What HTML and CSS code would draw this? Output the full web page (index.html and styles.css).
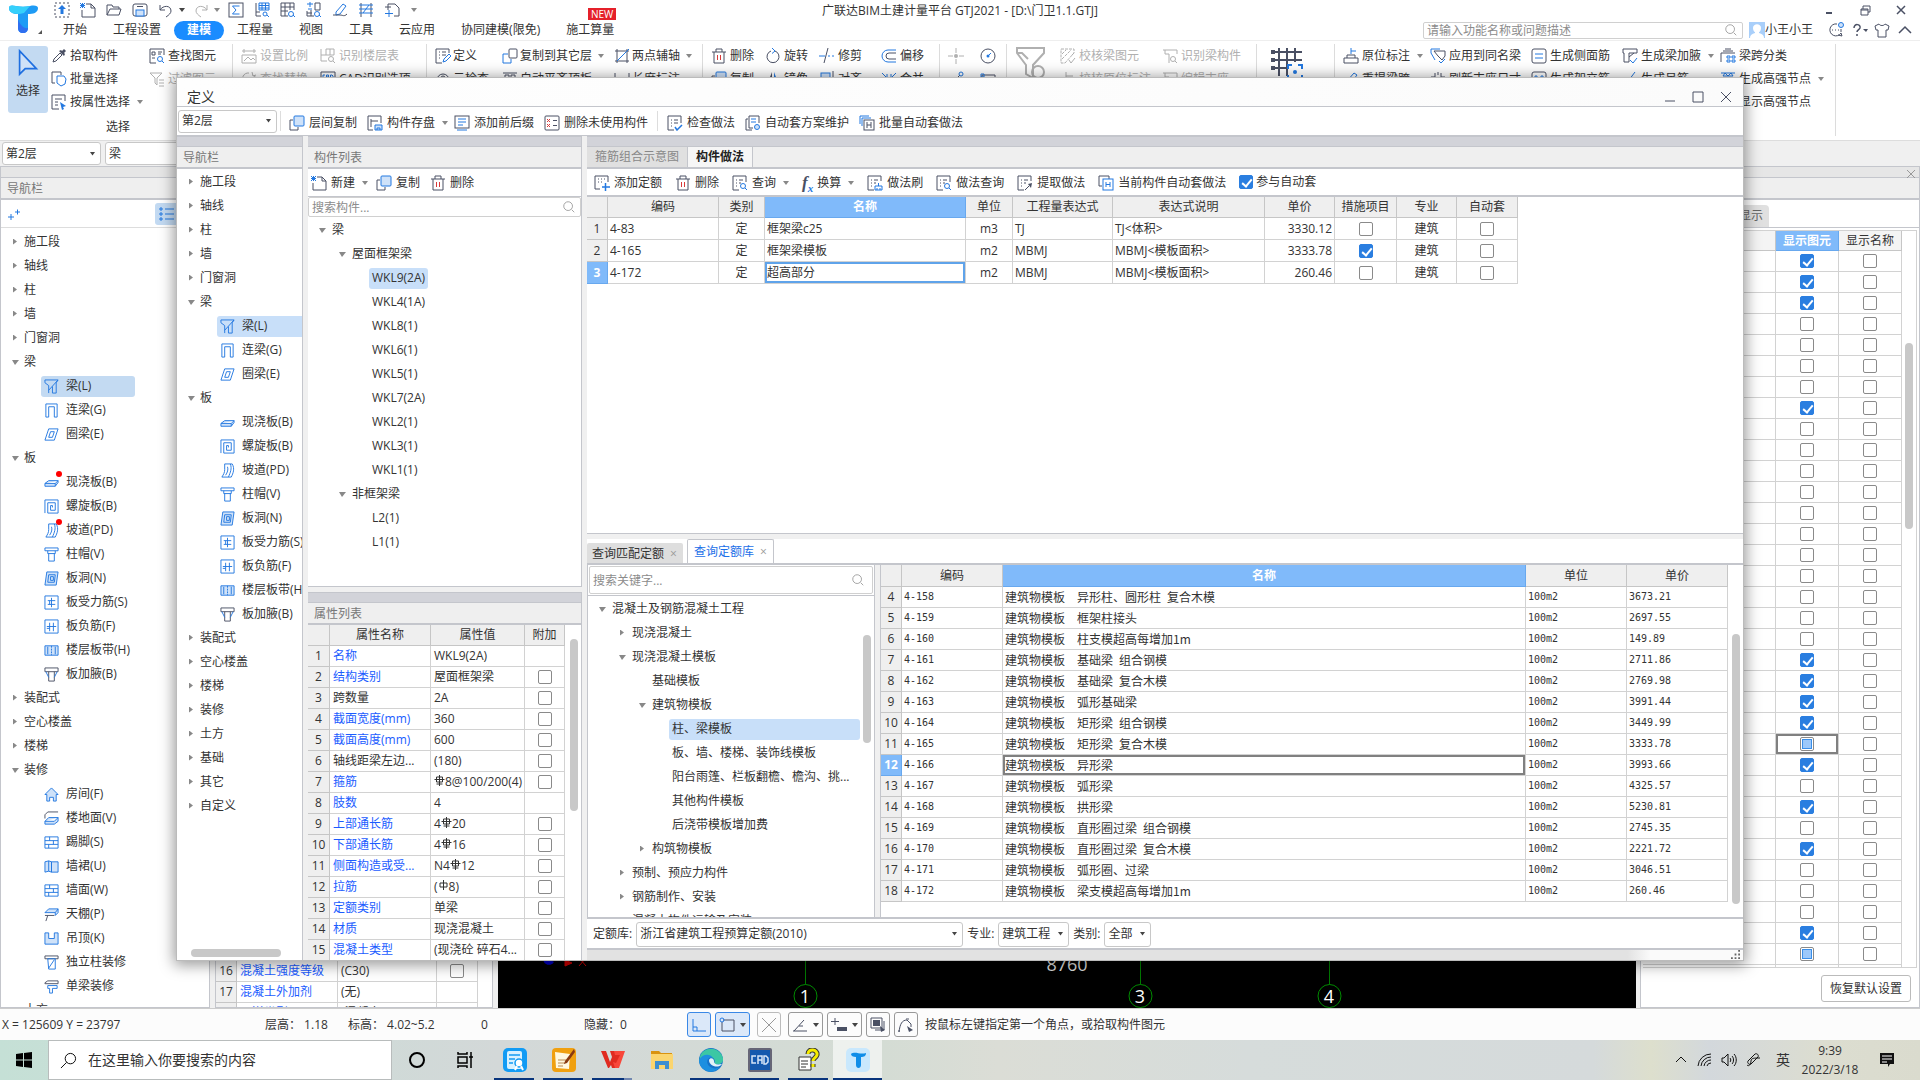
FILE: index.html
```html
<!DOCTYPE html>
<html lang="zh-CN">
<head>
<meta charset="utf-8">
<title>广联达BIM土建计量平台 GTJ2021</title>
<link rel="stylesheet" href="styles.css">
</head>
<body>
<svg class="sprite" aria-hidden="true">
  <symbol id="logo" viewBox="0 0 34 30"><path d="M1 4c0-3 3-3 7-2 5 1 9 1 14 0 5-1 8 0 8 2 0 5-5 6-10 6v14c0 3-2 5-5 5s-5-2-5-5V10C5 10 1 8 1 4z" fill="#1e9bf5"/><path d="M1 4c0-3 3-3 7-2 5 1 9 1 14 0l-6 7C9 11 1 10 1 4z" fill="#35d0fb"/><path d="M10 15v9c0 3 2 5 5 5s5-2 5-5c-4 1-8-3-10-9z" fill="#2f6ff0"/><path d="M34 26v5h-5z" fill="#555"/></symbol>
  <symbol id="up" viewBox="0 0 16 16"><rect x="1" y="1" width="14" height="14" stroke-dasharray="2 2"/><path class="bf" d="M8 3l4 4H9.500v5h-3V7H4z"/></symbol>
  <symbol id="new" viewBox="0 0 16 16"><path d="M6 2h5l4 4v9H2V8M11 2v4h4"/><path class="b" d="M0 1l5 5M5 1L0 6M0 3.500h5M2.500 1v5"/></symbol>
  <symbol id="open" viewBox="0 0 16 16"><path d="M1 13V3h5l1 2h6v2M1 13L4 7h11l-2 6z"/></symbol>
  <symbol id="save" viewBox="0 0 16 16"><rect x="1" y="2" width="14" height="12" rx="2"/><rect class="b bl" x="4" y="8" width="8" height="6"/><path d="M5 4.500h6"/></symbol>
  <symbol id="undo" viewBox="0 0 16 16"><path d="M2 3v5h5M2 8c3-5 11-5 11 1 0 2-2 4-5 6"/></symbol>
  <symbol id="redo" viewBox="0 0 16 16"><path d="M14 3v5H9M14 8C11 3 3 3 3 9c0 2 2 4 5 6"/></symbol>
  <symbol id="sum" viewBox="0 0 16 16"><rect x="1" y="1" width="14" height="14"/><path class="b" d="M11.500 4h-7L8 8l-3.500 4h7"/></symbol>
  <symbol id="t1" viewBox="0 0 16 16"><path d="M2 1v13h5M2 10h4"/><path class="b" d="M5 1h10v7H5zM5 3.500h10M5 6h10M8 1v7M11.500 1v7"/><circle class="b" cx="11" cy="12" r="2"/><path class="b" d="M13 13l2 2"/></symbol>
  <symbol id="t2" viewBox="0 0 16 16"><path d="M1 1h13v7M1 1v13h7M1 5h13M1 9h7M5 1v13M10 1v7"/><circle class="b" cx="11" cy="12" r="2.500"/><path class="b" d="M13 13l2 2"/></symbol>
  <symbol id="t3" viewBox="0 0 16 16"><path class="b" d="M4 0v5M1 2h6M2 7h4"/><path d="M9 1h5v7H9zM1 9v5h7M1 11h5M5 8v6"/><circle class="b" cx="11" cy="12" r="2.500"/><path class="b" d="M13 13l2 2"/></symbol>
  <symbol id="edit" viewBox="0 0 16 16"><path class="b" d="M4 10l7-8 3 2-6 8-4 1z"/><path d="M1 13h7c3 0 4 2 7-1"/></symbol>
  <symbol id="ladder" viewBox="0 0 16 16"><path d="M3 1v14M13 1v14"/><path class="b" d="M1 3h14M1 7h14M1 11h14M5 11l6-8"/></symbol>
  <symbol id="addp" viewBox="0 0 16 16"><path d="M4 8V2h7l4 4v8h-5M1 5h6"/><path class="b" d="M5 8v7M1 11.500h8"/></symbol>
  <symbol id="cursor" viewBox="0 0 22 30"><path d="M2 2v25l6-6h12z" fill="#cfe1f8" stroke="#1f6fe0" stroke-width="1.800"/></symbol>
  <symbol id="drop" viewBox="0 0 16 16"><path d="M2 14l1-3 6-6 2 2-6 6z"/><path class="df" d="M8 3l2-1 1 1 2-2 2 2-2 2 1 1-1 2z"/></symbol>
  <symbol id="multi" viewBox="0 0 16 16"><path d="M4 12H1V1h9v3"/><path class="b" d="M6 5h7l2 3-1 5-4 2-4-3z"/></symbol>
  <symbol id="attr" viewBox="0 0 16 16"><path d="M8 15H1V1h13v6M4 5h7M4 8h3M4 11h3"/><path class="bf" d="M9 8l6 4-3 1 1 2-2 1z"/></symbol>
  <symbol id="find" viewBox="0 0 16 16"><path d="M7 15H1V1h14v6M3 4h3v3H3zM3 10h3M9 4h4M9 6h3"/><circle class="b" cx="11" cy="11" r="2.500"/><path class="b" d="M13 13l2 2"/></symbol>
  <symbol id="filter" viewBox="0 0 16 16"><path d="M1 2h12L8 7v7l-2-2V7zM10 9h5M10 12h5M10 15h5"/></symbol>
  <symbol id="scale" viewBox="0 0 16 16"><path d="M1 3h14M3 1v4M13 1v4M1 7h14v8H1zM3 13l4-4 3 3 2-2 2 2"/></symbol>
  <symbol id="floor" viewBox="0 0 16 16"><path d="M1 1v12h6M1 7h5M6 1h8v6H6zM10 1v6"/><circle class="b" cx="11" cy="11" r="2.500"/><path class="b" d="M13 13l2 2"/></symbol>
  <symbol id="swap" viewBox="0 0 16 16"><path d="M3 12A6 6 0 0 1 8 2M13 4a6 6 0 0 1-5 10M11 1l1 4 3-1"/></symbol>
  <symbol id="cad" viewBox="0 0 16 16"><path d="M1 1h14v14H1z"/><path class="b" d="M5 4H3v4h2M6.500 8V4h2v4M6.500 6h2M10.500 4v4h1.500l1-1V5l-1-1z"/></symbol>
  <symbol id="define" viewBox="0 0 16 16"><path d="M7 15H1V1h13v4M4 4h1M7 4h4M4 7h1M7 7h4M4 10h1"/><path class="b" d="M8 14l1-3 5-5 2 2-5 5z"/></symbol>
  <symbol id="copy" viewBox="0 0 16 16"><path d="M4 5H1v10h8v-3"/><rect class="b bl" x="5" y="1" width="10" height="10" rx="1"/></symbol>
  <symbol id="copy2" viewBox="0 0 16 16"><rect x="7" y="1" width="8" height="9" rx="1"/><path class="b" d="M6 6H1v9h8v-4"/></symbol>
  <symbol id="axis" viewBox="0 0 16 16"><path d="M3 1v14M13 1v14M1 3h14M1 13h14"/><path class="b" d="M3 13L15 1"/></symbol>
  <symbol id="cloud" viewBox="0 0 16 16"><path d="M2 9a6 6 0 0 1 12 0v6H2z"/><circle cx="8" cy="7" r="2"/></symbol>
  <symbol id="slab" viewBox="0 0 16 16"><path d="M1 2h14M3 4h4v10H3zM9 4h4v10H9z"/></symbol>
  <symbol id="dim" viewBox="0 0 16 16"><path d="M1 2v12M15 2v12"/><path class="b" d="M1 10h14M4 7l-3 3 3 3M12 7l3 3-3 3"/></symbol>
  <symbol id="trash" viewBox="0 0 16 16"><path d="M1 4h14M5 4V1h6v3M3 4v11h10V4"/><path class="r" d="M6.500 7v5M9.500 7v5"/></symbol>
  <symbol id="rotate" viewBox="0 0 16 16"><path d="M10 3a6 6 0 1 1-4 0"/><path class="b" d="M7 0l3 3-3 2.500"/></symbol>
  <symbol id="trim" viewBox="0 0 16 16"><path d="M9 0L5 15"/><path class="b" d="M0 8h6M9 8h2M13 8h2"/></symbol>
  <symbol id="offset" viewBox="0 0 16 16"><path d="M15 5H8a2.500 2.500 0 0 0 0 6h7"/><path class="b" d="M15 2H7a6 6 0 0 0 0 12h8"/></symbol>
  <symbol id="mirror" viewBox="0 0 16 16"><path class="df" d="M7 1v13H2z"/><path class="bf" d="M9 1v13h5z"/></symbol>
  <symbol id="align" viewBox="0 0 16 16"><rect class="b bl" x="2" y="2" width="9" height="6"/><path d="M14 0v16M5 11h6v4H5z"/></symbol>
  <symbol id="merge" viewBox="0 0 16 16"><path class="b" d="M1 2l5 5V3M15 2l-5 5V3M1 14l5-5M15 14l-5-5"/></symbol>
  <symbol id="refresh" viewBox="0 0 16 16"><path d="M1 6h4V2M15 6h-4V2M8 1v3M1 10h4v4M15 10h-4v4"/></symbol>
  <symbol id="point" viewBox="0 0 16 16"><path d="M8 0v5M8 11v5M0 8h5M11 8h5"/><circle class="df" cx="8" cy="8" r="2"/></symbol>
  <symbol id="circle" viewBox="0 0 16 16"><circle cx="8" cy="8" r="7"/><path class="b" d="M8 8l3-3"/><circle class="bf" cx="8" cy="8" r="1.500"/></symbol>
  <symbol id="line" viewBox="0 0 16 16"><path d="M2 14L12 4"/><circle class="b" cx="13" cy="3" r="2"/></symbol>
  <symbol id="rect" viewBox="0 0 16 16"><path d="M2 4h13v10H2z"/><path class="b" d="M1 3h3v3H1z"/></symbol>
  <symbol id="bigfilter" viewBox="0 0 32 36"><path d="M2 2h27v5L18 19v13l-7-4V19L2 7zM2 7h5l6 6" stroke-width="2"/><circle cx="23" cy="26" r="6" stroke-width="2"/></symbol>
  <symbol id="hatch" viewBox="0 0 16 16"><path d="M1 1h13v4L5 15H1zM2 6l4-4M2 11l9-9M14 5l-3 3" stroke-dasharray="3 1"/><path d="M9 12l2 3 4-5"/></symbol>
  <symbol id="ident" viewBox="0 0 16 16"><path d="M1 2h14M3 2v4h4v9M15 2v4"/><circle class="b" cx="11" cy="11" r="2.500"/><path class="b" d="M13 13l2 2"/></symbol>
  <symbol id="mark" viewBox="0 0 16 16"><path d="M6 1v10M6 5h7M1 11h11v4H1z"/></symbol>
  <symbol id="biggrid" viewBox="0 0 32 36"><path d="M2 6h29M2 14h29M2 22h14M8 2v28M16 2v28M24 2v14" stroke-width="2"/><path class="df" d="M0 4h4v4H0zM0 12h4v4H0zM0 20h4v4H0z"/><path class="b" d="M17 23v-4h4M27 19h4v4M17 29v4h4M31 29v4h-4" stroke-width="2"/><circle class="bf" cx="24" cy="26" r="2"/></symbol>
  <symbol id="origin" viewBox="0 0 16 16"><path d="M1 10h14v5H1zM4 10V7h8v3"/><path class="b" d="M8 0v6M8 3h5"/></symbol>
  <symbol id="apply" viewBox="0 0 16 16"><path d="M4 3h11v5l-3 4-4-4z"/><path class="b" d="M5 12L1 5V1h9M9 13l2 2 4-4"/></symbol>
  <symbol id="side" viewBox="0 0 16 16"><rect x="1" y="1" width="14" height="14" rx="2"/><path class="b" d="M4 6h8M4 10h8"/></symbol>
  <symbol id="dots" viewBox="0 0 16 16"><rect x="1" y="1" width="14" height="14" rx="2"/><path class="b" d="M4 5h2v2H4zM10 5h2v2h-2z"/></symbol>
  <symbol id="haunch" viewBox="0 0 16 16"><path d="M1 1h14v4H7v9H2V5H1zM7 9l5-4"/><path class="b" d="M8 12l3 3 4-5"/></symbol>
  <symbol id="tick" viewBox="0 0 16 16"><path class="b" d="M4 6l3 3 6-8"/></symbol>
  <symbol id="span" viewBox="0 0 16 16"><path d="M1 14V5h14M3 3h10M5 1h6"/><path class="b" d="M7 8h3v2H7zM12 8h3v2h-3zM7 12h3v2H7zM12 12h3v2h-3z"/></symbol>
  <symbol id="node" viewBox="0 0 16 16"><path class="b" d="M1 2h14M3 5l2-3 3 3 3-3 2 3z"/><path d="M1 8h14M4 8v7M12 8v7"/></symbol>
  <symbol id="disk" viewBox="0 0 16 16"><path d="M6 15H1V1h13v7M4 4v8M4 6h7"/><path class="b bl" d="M8 10h7v5H8zM10 15v-2h3v2"/></symbol>
  <symbol id="lines" viewBox="0 0 16 16"><rect x="1" y="1" width="14" height="12"/><path class="b" d="M4 4h8M4 7h8M4 10h5M3 15h10"/></symbol>
  <symbol id="unused" viewBox="0 0 16 16"><rect x="1" y="1" width="14" height="14" rx="1"/><path class="r" d="M3 4l3 3M6 4L3 7M3 9l3 3M6 9l-3 3"/><path d="M9 5.500h4M9 10.500h4"/></symbol>
  <symbol id="check" viewBox="0 0 16 16"><path d="M7 15H1V1h13v7M4 5h1M7 5h4M4 8h1M7 8h4M4 11h1"/><path class="b" d="M8 12l2 3 5-5" stroke-width="1.500"/></symbol>
  <symbol id="plan" viewBox="0 0 16 16"><path d="M7 15H1V4h2M8 13H4V1h10v7"/><path class="b" d="M6 4h5M6 7h5"/><circle class="b bl" cx="12" cy="12" r="2.500"/></symbol>
  <symbol id="batch" viewBox="0 0 16 16"><path class="b" d="M1 9V1h9M3 11V3h9"/><rect x="5" y="5" width="10" height="10"/><path d="M8 7v6M12 7v6M8 10h4"/></symbol>
  <symbol id="batch2" viewBox="0 0 16 16"><path d="M4 11H1V1h10v3"/><rect class="b" x="5" y="4" width="10" height="11"/><path class="b" d="M8 7v5M12 7v5M8 9.500h4"/></symbol>
  <symbol id="addq" viewBox="0 0 16 16"><path d="M6 14H1V1h13v6M4 4h1M7 4h1M10 4h1M4 7h1M7 7h1"/><path class="b" d="M11.500 8v8M8 12h8" stroke-width="1.500"/></symbol>
  <symbol id="query" viewBox="0 0 16 16"><path d="M7 15H1V1h13v6M4 5h1M7 5h4M4 8h1M4 11h1M7 8h2"/><circle class="b" cx="11" cy="11" r="2.500"/><path class="b" d="M13 13l2 2"/></symbol>
  <symbol id="brush" viewBox="0 0 16 16"><path d="M7 15H1V1h13v5M4 5h1M7 5h4M4 8h1M7 8h2M4 11h1"/><path class="b" d="M11.500 8v3M8 11h7v4H8zM10 13v2M13 13v2"/></symbol>
  <symbol id="extract" viewBox="0 0 16 16"><path d="M7 15H1V1h13v5M4 5h1M7 5h4M4 8h1M7 8h2M4 11h1M8 15l4-4"/><path class="df" d="M11 9l4-1-1 5z"/></symbol>
  <symbol id="beam" viewBox="0 0 16 16"><path class="b" d="M5 15V7L1 4V1h14L5 12M9 8v7h4V4l2-3"/></symbol>
  <symbol id="lianliang" viewBox="0 0 16 16"><path class="b" d="M2 15V1h12v14h-3V4H5v11z"/></symbol>
  <symbol id="ring" viewBox="0 0 16 16"><path class="b" d="M5 2h10l-4 12H1zM7 5h4l-2 6H5z"/></symbol>
  <symbol id="board" viewBox="0 0 16 16"><path class="b bl" d="M1 9l4-3h10v2l-3 4H1zM1 9h11l3-3M12 9v3"/></symbol>
  <symbol id="spiral" viewBox="0 0 16 16"><path class="b" d="M1 15V1h14v14H4V4h8v8H7V7h2v2"/></symbol>
  <symbol id="ramp" viewBox="0 0 16 16"><path class="b" d="M5 1h8c3 5 1 10-1 14H2c2-3 3-5 3-8zM8 4c1 3 0 6-2 9M11 1c2 5 0 9-2 14" /></symbol>
  <symbol id="cap" viewBox="0 0 16 16"><path class="b" d="M1 1h14v3H1zM4 4v3h8V4M5 7v8h6V7"/></symbol>
  <symbol id="hole" viewBox="0 0 16 16"><path class="b bl" d="M3 1h12l-2 14H1zM5 4h7l-1 8H4zM7 6h3v4H7z"/></symbol>
  <symbol id="rebar" viewBox="0 0 16 16"><path class="b" d="M1 1h14v14H1zM4 6h8M4 10h8M8 3v10M6 6v4"/></symbol>
  <symbol id="rebar2" viewBox="0 0 16 16"><path class="b" d="M1 1h14v14H1zM6 4v9M10 4v9M3 8h10M3 10h3"/></symbol>
  <symbol id="band" viewBox="0 0 16 16"><path class="b bl" d="M1 3h14v10H1z"/><path class="b" d="M4 4v8M12 4v8" /><path class="b" d="M8 3v10" stroke-dasharray="2 1"/></symbol>
  <symbol id="yezi" viewBox="0 0 16 16"><path d="M1 1h14v4H1zM5 5v10h6V5"/><path class="b" d="M2 5l3 6M14 5l-3 6"/></symbol>
  <symbol id="home" viewBox="0 0 16 16"><path class="b bl" d="M1 8l7-7 7 7h-2v7h-3v-4H6v4H3V8z"/></symbol>
  <symbol id="ground" viewBox="0 0 16 16"><path d="M1 8V4l3-3h11"/><path class="b bl" d="M1 11l4-4h10l-4 4zM1 11v3h10l4-3V7"/></symbol>
  <symbol id="bricks" viewBox="0 0 16 16"><path class="b" d="M1 2h14v12H1zM1 6h14M1 10h14M6 2v4M10 6v4M5 10v4"/></symbol>
  <symbol id="dado" viewBox="0 0 16 16"><path class="b bl" d="M1 3l4-1v11l-4 1zM5 2l3 1v11l-3-1M8 3h7v11H8z"/></symbol>
  <symbol id="ceil" viewBox="0 0 16 16"><path class="b bl" d="M1 6l4-4h10l-3 4zM12 6v3l3-3V2"/><path d="M1 9h10M4 9l-2 6"/></symbol>
  <symbol id="hang" viewBox="0 0 16 16"><path class="b bl" d="M1 2h4v6h6V2h4v12H1z"/></symbol>
  <symbol id="colfin" viewBox="0 0 16 16"><path d="M1 1h14v3H1z"/><path class="b" d="M4 4h8v11H5zM5 14l6-9"/></symbol>
  <symbol id="beamfin" viewBox="0 0 16 16"><path d="M1 4l3-2h11v3H1z"/><path class="b" d="M4 7h10v3H9v5H6v-5H4z"/></symbol>
  <symbol id="mag" viewBox="0 0 16 16"><circle cx="7" cy="7" r="5"/><path d="M11 11l3 3"/></symbol>
  <symbol id="win" viewBox="0 0 16 16"><path d="M0 2l7-1v6.500H0zM8 1l8-1v7.500H8zM0 8.500h7V15l-7-1zM8 8.500h8V16l-8-1z" fill="#000" stroke="none"/></symbol>
</svg>

<header class="titlebar">
  <svg class="logo"><use href="#logo"/></svg>
  <div class="titlemain">
    <div class="quick">
      <svg class="ico"><use href="#up"/></svg><svg class="ico"><use href="#new"/></svg><svg class="ico"><use href="#open"/></svg><svg class="ico"><use href="#save"/></svg><svg class="ico"><use href="#undo"/></svg><i class="dd dk"></i><svg class="ico off"><use href="#redo"/></svg><i class="dd"></i><svg class="ico"><use href="#sum"/></svg><svg class="ico"><use href="#t1"/></svg><svg class="ico"><use href="#t2"/></svg><svg class="ico"><use href="#t3"/></svg><svg class="ico"><use href="#edit"/></svg><svg class="ico"><use href="#ladder"/></svg><svg class="ico"><use href="#addp"/></svg><i class="dd more"></i>
    </div>
    <nav class="tabs">
      <a href="#">开始</a><a href="#">工程设置</a><a href="#" class="on">建模</a><a href="#">工程量</a><a href="#">视图</a><a href="#">工具</a><a href="#">云应用</a><a href="#">协同建模(限免)</a><a href="#">施工算量<b class="newbadge">NEW</b></a>
    </nav>
  </div>
  <h1 class="apptitle">广联达BIM土建计量平台 GTJ2021 - [D:\门卫1.1.GTJ]</h1>
  <div class="titleright">
    <div class="winbtns">
      <button aria-label="最小化"><svg class="ico"><path d="M5 11h6" stroke-width="2"/></svg></button>
      <button aria-label="还原"><svg class="ico"><path d="M4 7h7v6H4zM6 7V4h7v6h-2M4 8h7"/></svg></button>
      <button aria-label="关闭"><svg class="ico"><path d="M4 4l8 8M12 4l-8 8" stroke-width="1.500"/></svg></button>
    </div>
    <div class="userrow">
      <label class="search"><input type="text" placeholder="请输入功能名称或问题描述" aria-label="搜索功能"><svg class="ico mut"><use href="#mag"/></svg></label>
      <svg class="avatar" viewBox="0 0 16 16"><path fill="#a9cffa" d="M0 0h16v16H0z"/><path fill="#fff" d="M4 6c0-5 8-5 8 0 0 2-1 4-2 4v1c3 1 5 2 5 5H1c0-3 2-4 5-5v-1C5 10 4 8 4 6z"/></svg>
      <span class="user">小王小王</span>
      <svg class="ico"><path d="M9 2a6 6 0 1 0 4 9M13 11l1 3-4-1M13 7v3M4 8h1M7 8h1M10 8h1"/><circle class="b bl" cx="13" cy="3" r="2.500"/></svg>
      <svg class="ico wide"><path d="M3 6c0-5 7-4 6 0-1 2-3 2-3 4M6 12v2" stroke-width="1.500"/><path class="df" d="M12 7h5l-2 3z"/></svg>
      <svg class="ico"><path d="M5 2c1 2 5 2 6 0l4 2-1 4h-2v7H4V8H2L1 4z"/></svg>
      <svg class="ico"><path d="M2 11l6-6 6 6" stroke-width="1.500"/></svg>
    </div>
  </div>
</header>

<section class="ribbon">
  <div class="rg g1">
    <button class="bigbtn"><svg class="cursor"><use href="#cursor"/></svg>选择</button>
    <div class="cols">
      <button><svg class="ico"><use href="#drop"/></svg>拾取构件</button><button><svg class="ico"><use href="#find"/></svg>查找图元</button>
      <button><svg class="ico"><use href="#multi"/></svg>批量选择</button><button class="off"><svg class="ico"><use href="#filter"/></svg>过滤图元</button>
      <button><svg class="ico"><use href="#attr"/></svg>按属性选择<i class="dd"></i></button>
      <span class="glabel">选择</span>
    </div>
  </div>
  <div class="rg g2">
    <button class="off"><svg class="ico"><use href="#scale"/></svg>设置比例</button><button class="off"><svg class="ico"><use href="#floor"/></svg>识别楼层表</button>
    <button class="off"><svg class="ico"><use href="#swap"/></svg>查找替换</button><button><svg class="ico"><use href="#cad"/></svg>CAD识别选项</button>
  </div>
  <div class="rg g3">
    <button><svg class="ico"><use href="#define"/></svg>定义</button><button><svg class="ico"><use href="#copy2"/></svg>复制到其它层<i class="dd"></i></button><button><svg class="ico"><use href="#axis"/></svg>两点辅轴<i class="dd"></i></button>
    <button><svg class="ico"><use href="#cloud"/></svg>云检查</button><button><svg class="ico"><use href="#slab"/></svg>自动平齐顶板</button><button><svg class="ico"><use href="#dim"/></svg>长度标注</button>
  </div>
  <div class="rg g4">
    <button><svg class="ico"><use href="#trash"/></svg>删除</button><button><svg class="ico"><use href="#rotate"/></svg>旋转</button><button><svg class="ico"><use href="#trim"/></svg>修剪</button><button><svg class="ico"><use href="#offset"/></svg>偏移</button>
    <button><svg class="ico"><use href="#copy"/></svg>复制</button><button><svg class="ico"><use href="#mirror"/></svg>镜像</button><button><svg class="ico"><use href="#align"/></svg>对齐</button><button><svg class="ico"><use href="#merge"/></svg>合并</button>
  </div>
  <div class="rg g5">
    <button class="off" aria-label="点"><svg class="ico"><use href="#point"/></svg></button><button aria-label="圆"><svg class="ico"><use href="#circle"/></svg></button>
    <button aria-label="直线"><svg class="ico"><use href="#line"/></svg></button><button aria-label="矩形"><svg class="ico"><use href="#rect"/></svg></button>
  </div>
  <div class="rg g6">
    <svg class="big off"><use href="#bigfilter"/></svg>
    <button class="off"><svg class="ico"><use href="#hatch"/></svg>校核梁图元</button><button class="off"><svg class="ico"><use href="#ident"/></svg>识别梁构件</button>
    <button class="off"><svg class="ico"><use href="#mark"/></svg>校核原位标注</button><button class="off"><svg class="ico"><use href="#ident"/></svg>编辑支座</button>
  </div>
  <div class="rg g7"><svg class="big"><use href="#biggrid"/></svg></div>
  <div class="rg g8">
    <button><svg class="ico"><use href="#origin"/></svg>原位标注<i class="dd"></i></button><button><svg class="ico"><use href="#apply"/></svg>应用到同名梁</button><button><svg class="ico"><use href="#side"/></svg>生成侧面筋</button><button><svg class="ico"><use href="#haunch"/></svg>生成梁加腋<i class="dd"></i></button><button><svg class="ico"><use href="#span"/></svg>梁跨分类</button>
    <button><svg class="ico"><use href="#edit"/></svg>重提梁跨</button><button><svg class="ico"><use href="#refresh"/></svg>刷新支座尺寸</button><button><svg class="ico"><use href="#dots"/></svg>生成架立筋</button><button><svg class="ico"><use href="#tick"/></svg>生成吊筋</button><button><svg class="ico"><use href="#node"/></svg>生成高强节点<i class="dd"></i></button>
    <button class="last"><svg class="ico"><use href="#node"/></svg>显示高强节点</button>
  </div>
</section>

<section class="context">
  <select class="sel w100" aria-label="楼层"><option>第2层</option></select>
  <select class="sel w100" aria-label="构件类型"><option>梁</option></select>
</section>

<main class="work">
  <section class="pane leftnav">
    <div class="strip"></div><h2 class="phead">导航栏</h2>
    <div class="minitools"><svg class="ico"><path class="b" d="M1 11h6M4 8v6M8 6h5M10.500 3.500v5"/></svg><button class="listbtn" aria-label="列表"><svg class="ico"><path class="b" d="M1 2h2v2H1zM1 7h2v2H1zM1 12h2v2H1zM6 3h9M6 8h9M6 13h9"/></svg></button></div>
    <ul class="tree" data-tree="main"></ul>
  </section>
  <section class="pane backprops"><div class="clip"><table class="grid props" data-props="back"></table></div></section>
  <section class="canvas">
    <svg class="drawing" viewBox="0 0 1138 60">
      <path d="M46 8a5 5 0 0 0 10 6z" fill="#0000c0"/><path d="M67 12l7 3-7 3zM81 18l6-7M82 11l6 7" fill="#c00" stroke="#c00"/>
      <g fill="none" stroke="#007a00"><path d="M307.500 0v60M642.500 0v60M831.500 0v60"/></g>
      <g fill="#000" stroke="#008a00"><circle cx="307.500" cy="48" r="11.500"/><circle cx="642.500" cy="48" r="11.500"/><circle cx="831.500" cy="48" r="11.500"/></g>
      <g fill="#fff" font-size="18" text-anchor="middle"><text x="307" y="55">1</text><text x="642" y="55">3</text><text x="831" y="55">4</text><text x="569" y="23" fill="#ddd">8760</text></g>
    </svg>
  </section>
  <section class="pane display">
    <div class="strip"><svg class="ico mut"><path d="M4 3l8 8M12 3l-8 8"/></svg></div><h2 class="phead"></h2>
    <div class="dtabs"><button class="dtab">显示</button></div>
    <div class="dgrid"><table class="grid" data-display></table><div class="vtrack"><i></i></div></div>
    <div class="dfoot"><button class="outline">恢复默认设置</button></div>
  </section>
</main>

<section class="dialog" role="dialog" aria-label="定义">
  <div class="dtitle"><h2>定义</h2>
    <button aria-label="最小化"><svg class="ico"><path d="M3 12h10"/></svg></button><button aria-label="最大化"><svg class="ico"><path d="M3 3h10v10H3z"/></svg></button><button aria-label="关闭"><svg class="ico"><path d="M3 3l10 10M13 3L3 13"/></svg></button></div>
  <div class="tbar main">
    <select class="sel w100" aria-label="楼层"><option>第2层</option></select><i class="sep"></i>
    <button><svg class="ico"><use href="#copy"/></svg>层间复制</button><button><svg class="ico"><use href="#disk"/></svg>构件存盘<i class="dd"></i></button><button><svg class="ico"><use href="#lines"/></svg>添加前后缀</button><button><svg class="ico"><use href="#unused"/></svg>删除未使用构件</button><i class="sep"></i>
    <button><svg class="ico"><use href="#check"/></svg>检查做法</button><button><svg class="ico"><use href="#plan"/></svg>自动套方案维护</button><button><svg class="ico"><use href="#batch"/></svg>批量自动套做法</button>
  </div>
  <div class="dbody">
    <section class="dnav">
      <div class="strip"></div><h2 class="phead">导航栏</h2>
      <ul class="tree" data-tree="dialog"></ul>
      <div class="hbar"></div>
    </section>
    <section class="dmid">
      <div class="complist">
        <div class="strip"></div><h2 class="phead">构件列表</h2>
        <div class="tbar"><button><svg class="ico"><use href="#new"/></svg>新建<i class="dd"></i></button><button><svg class="ico"><use href="#copy"/></svg>复制</button><button><svg class="ico"><use href="#trash"/></svg>删除</button></div>
        <label class="search"><input type="text" placeholder="搜索构件..." aria-label="搜索构件"><svg class="ico mut"><use href="#mag"/></svg></label>
        <ul class="tree text" data-tree="comp"></ul>
      </div>
      <div class="proplist">
        <div class="strip"></div><h2 class="phead">属性列表</h2>
        <div class="proprow"><table class="grid props" data-props="front"></table><div class="vbar"></div></div>
      </div>
    </section>
    <section class="dright">
      <div class="method">
        <div class="strip"></div>
        <div class="phead mtabs"><button>箍筋组合示意图</button><button class="on">构件做法</button></div>
        <div class="tbar wide">
          <button><svg class="ico"><use href="#addq"/></svg>添加定额</button><button><svg class="ico"><use href="#trash"/></svg>删除</button><button><svg class="ico"><use href="#query"/></svg>查询<i class="dd"></i></button><button><span class="fx">f<sub>x</sub></span>换算<i class="dd"></i></button><button><svg class="ico"><use href="#brush"/></svg>做法刷</button><button><svg class="ico"><use href="#query"/></svg>做法查询</button><button><svg class="ico"><use href="#extract"/></svg>提取做法</button><button><svg class="ico"><use href="#batch2"/></svg>当前构件自动套做法</button>
          <label class="tick"><input type="checkbox" checked>参与自动套</label>
        </div>
        <table class="grid methods">
          <thead><tr><th></th><th>编码</th><th>类别</th><th class="on">名称</th><th>单位</th><th>工程量表达式</th><th>表达式说明</th><th>单价</th><th>措施项目</th><th>专业</th><th>自动套</th></tr></thead>
          <tbody>
            <tr><th>1</th><td>4-83</td><td class="c">定</td><td>框架梁c25</td><td class="c">m3</td><td>TJ</td><td>TJ&lt;体积&gt;</td><td class="n">3330.12</td><td class="c"><input type="checkbox" aria-label="措施项目"></td><td class="c">建筑</td><td class="c"><input type="checkbox" aria-label="自动套"></td></tr>
            <tr><th>2</th><td>4-165</td><td class="c">定</td><td>框架梁模板</td><td class="c">m2</td><td>MBMJ</td><td>MBMJ&lt;模板面积&gt;</td><td class="n">3333.78</td><td class="c"><input type="checkbox" checked aria-label="措施项目"></td><td class="c">建筑</td><td class="c"><input type="checkbox" aria-label="自动套"></td></tr>
            <tr><th class="on">3</th><td>4-172</td><td class="c">定</td><td class="focus">超高部分</td><td class="c">m2</td><td>MBMJ</td><td>MBMJ&lt;模板面积&gt;</td><td class="n">260.46</td><td class="c"><input type="checkbox" aria-label="措施项目"></td><td class="c">建筑</td><td class="c"><input type="checkbox" aria-label="自动套"></td></tr>
          </tbody>
        </table>
      </div>
      <div class="qtabs"><button>查询匹配定额<span>×</span></button><button class="on">查询定额库<span>×</span></button></div>
      <div class="quota">
        <div class="qtree">
          <label class="search"><input type="text" placeholder="搜索关键字..." aria-label="搜索关键字"><svg class="ico mut"><use href="#mag"/></svg></label>
          <div class="qscroll"><ul class="tree text" data-tree="quota"></ul><div class="vbar"></div></div>
        </div>
        <div class="qgrid"><table class="grid song" data-quota></table><div class="vbar"></div></div>
      </div>
      <div class="filters">
        <label for="lib">定额库:</label><select id="lib" class="sel lib"><option>浙江省建筑工程预算定额(2010)</option></select>
        <label for="pro">专业:</label><select id="pro" class="sel pro"><option>建筑工程</option></select>
        <label for="cat">类别:</label><select id="cat" class="sel cat"><option>全部</option></select>
      </div>
      <div class="dbottom"><svg class="grip" viewBox="0 0 10 10"><path d="M8 0h2v2H8zM4 4h2v2H4zM8 4h2v2H8zM0 8h2v2H0zM4 8h2v2H4zM8 8h2v2H8z" fill="#666"/></svg></div>
    </section>
  </div>
</section>

<footer class="status">
  <span class="s1">X = 125609 Y = 23797</span><span class="s2">层高：&nbsp;1.18</span><span class="s3">标高：&nbsp;4.02~5.2</span><span class="s4">0</span><span class="s5">隐藏：0</span>
  <div class="modes">
    <button class="on" aria-label="正交"><svg class="ico"><path class="b" d="M2 2v12h13M2 10h4v4"/></svg></button>
    <button class="on" aria-label="捕捉"><svg class="ico"><path d="M4 3h11v11H3V5"/><circle class="b" cx="3" cy="3" r="2"/></svg><i class="dd dk"></i></button>
    <button aria-label="交点"><svg class="ico mut"><path d="M1 1l14 14M15 1L1 15"/></svg></button>
    <button aria-label="角度"><svg class="ico"><path d="M1 14h14M2 14L12 3M7 9h4"/></svg><i class="dd dk"></i></button>
    <button aria-label="偏移"><svg class="ico"><path d="M4 1v7M0 4.500h8"/><path class="df" d="M6 10h10v4H6z"/></svg><i class="dd dk"></i></button>
    <button aria-label="选择"><svg class="ico"><path d="M1 1h11v10H1zM5 13h9V4"/><path class="df" d="M3 3h7v6H3zM10 9l5 4-4 2z"/></svg></button>
    <button aria-label="折线"><svg class="ico"><path d="M1 15C2 7 4 3 9 3l4 4v3M1 13v2M8 2h3"/><path class="df" d="M9 9l6 4-4 2z"/></svg></button>
  </div>
  <span>按鼠标左键指定第一个角点，或拾取构件图元</span>
</footer>

<footer class="taskbar">
  <button class="start" aria-label="开始"><svg class="ico"><use href="#win"/></svg></button>
  <label class="tsearch"><svg viewBox="0 0 18 18"><circle cx="11" cy="7" r="5.500"/><path d="M7 11l-6 6"/></svg><input type="text" placeholder="在这里输入你要搜索的内容" aria-label="搜索"></label>
  <div class="apps">
    <button aria-label="Cortana"><svg viewBox="0 0 24 24"><circle cx="12" cy="12" r="7" fill="none" stroke="#000" stroke-width="2"/></svg></button>
    <button aria-label="任务视图"><svg viewBox="0 0 24 24"><path d="M4 4v2h9V4M4 20v-2h9v2M4 9h9v6H4zM17 4v16M15 9h4" fill="none" stroke="#000" stroke-width="1.500"/></svg></button>
    <button class="run" aria-label="计价"><svg viewBox="0 0 24 24"><rect width="24" height="24" rx="5" fill="#129bf4"/><rect x="4" y="3" width="15" height="18" rx="2" fill="#d8f1ff"/><path d="M6 7h11M6 11h6M6 15h4" stroke="#129bf4" stroke-width="1.500"/><circle cx="16" cy="15" r="4" fill="#fff" stroke="#129bf4" stroke-width="1.500"/><path d="M14 18l-2 4M18 18l2 4" stroke="#fff" stroke-width="2"/></svg></button>
    <button class="run" aria-label="画图"><svg viewBox="0 0 24 24"><rect width="24" height="24" rx="4" fill="#f0a010"/><path d="M3 4l15 2-1 15-13-1z" fill="#fff8e0"/><path d="M6 12h8M6 15h7M6 18h5" stroke="#b98a50"/><path d="M22 1l-9 12-1 3 3-1L23 4z" fill="#8a3a10"/></svg></button>
    <button class="run two" aria-label="WPS"><svg viewBox="0 0 24 24"><path d="M0 3h5l4 11 2-5-2-6h12l-5 17h-5l-1-3-2 3H7z" fill="#e02b20"/><path d="M13 3h11l-6 17h-4l-2-6 3 1 4-8h-5z" fill="#f8473a"/></svg></button>
    <button aria-label="文件资源管理器"><svg viewBox="0 0 24 24"><path d="M1 3h8l2 2h11v4H1z" fill="#d9930f"/><path d="M1 6h22v15H1z" fill="#fbd56e"/><path d="M5 21v-8h14v8h-4v-4H9v4z" fill="#3e8fd0"/></svg></button>
    <button class="run" aria-label="Edge"><svg viewBox="0 0 24 24"><circle cx="12" cy="12" r="12" fill="#1673c9"/><path d="M1 9C3-1 20-3 24 10c1 6-5 7-9 6 2-3 0-7-4-7C7 8 3 10 0 14z" fill="#3cc7a4"/><path d="M0 12c3-6 11-7 14-2-5-2-8 4-4 8 3 3 8 3 11 1-7 9-21 4-21-7z" fill="#1d8fe0"/><path d="M10 12c1-3 5-2 5 1s2 4 8 3c-4 5-13 2-13-4z" fill="#e3f2f8"/></svg></button>
    <button class="run" aria-label="CAD"><svg viewBox="0 0 24 24"><rect width="24" height="24" rx="2" fill="#667"/><rect x="2" y="2" width="20" height="20" fill="#1559ae"/><path d="M8 8H4v7h4M10 16V8h4v8M10 12h4M16 8h2l2 2v4l-2 2h-2z" fill="none" stroke="#d5e4f7" stroke-width="1.500"/></svg></button>
    <button class="run" aria-label="帮助"><svg viewBox="0 0 24 24"><path d="M2 9h12v13H2z" fill="#fff" stroke="#333"/><path d="M4 13h7M4 16h7M4 19h5" stroke="#333"/><path d="M11 6c0-6 10-5 9 1-1 3-4 3-4 6M16 16v3" fill="none" stroke="#333" stroke-width="5"/><path d="M11 6c0-6 10-5 9 1-1 3-4 3-4 6M16 16v3" fill="none" stroke="#f5ec00" stroke-width="3"/></svg></button>
    <button class="run active" aria-label="GTJ"><svg viewBox="0 0 24 24"><rect width="24" height="24" rx="5" fill="#c9e8fd"/><path d="M5 6c4-3 9 1 15-1 0 3-2 4-5 4v8c0 4-5 4-5 0V9C7 9 5 8 5 6z" fill="#0f8de8"/></svg></button>
  </div>
  <div class="tray">
    <svg class="ico"><path d="M3 10l5-5 5 5"/></svg>
    <svg class="ico"><path d="M1 14A13 13 0 0 1 14 2M4 14A10 10 0 0 1 14 5M7 14a7 7 0 0 1 7-6M10 14a4 4 0 0 1 4-3"/></svg>
    <svg class="ico"><path d="M1 6h2l4-4v12l-4-4H1zM9 6c1 1 1 3 0 4M11 4c2 2 2 6 0 8M13 2c3 3 3 9 0 12"/></svg>
    <svg class="ico"><path d="M3 9l7-7c2-1 4 1 3 3L6 12c-2 1-4-1-3-3zM2 13c2 2 4-1 4-4s3-3 9-3"/></svg>
    <span class="ime">英</span>
    <div class="clock"><span>9:39</span><span>2022/3/18</span></div>
    <svg class="ico note"><path class="df" d="M1 1h14v11h-4l-2 3v-3H1z"/><path d="M3 4h10M3 7h10M3 10h5" stroke="#fff"/></svg>
  </div>
</footer>
<script src="app.js"></script>
</body>
</html>
```
FILE: styles.css
```css
:root { --dark: #4a5064; --ac: #2378e0; --line: #d2d2d2; --edge: #c4c6cc; --head: #efefef; --strip: #d2d3d9; --sel: #c8dff9; --hi: #80bafa; }
* { box-sizing: border-box; }
html, body { height: 100%; }
body { margin: 0; display: flex; flex-direction: column; overflow: hidden; position: relative; background: #fff; color: #333; font: 12px/20px "Open Sans", "Noto Sans CJK SC", sans-serif; }
button, input, select { font: inherit; color: inherit; }
button { border: 0; background: none; padding: 0; display: inline-flex; align-items: center; white-space: nowrap; }
h1, h2 { margin: 0; font-size: 12px; font-weight: 400; }
ul { list-style: none; margin: 0; padding: 0; }
a { color: inherit; text-decoration: none; }
.sprite { position: absolute; width: 0; height: 0; }

.ico { width: 16px; height: 16px; flex: none; fill: none; stroke: currentColor; stroke-width: 1; color: var(--dark); overflow: visible; }
.b { stroke: var(--ac); }
.bl { fill: #cfe2f9; }
.bf { fill: var(--ac); stroke: none; }
.df { fill: currentColor; stroke: none; }
.r { stroke: #d83a3a; }
.off, .off .ico { color: #b0b0b0; --ac: #b0b0b0; }
.mut { color: #999; }
.dd { width: 0; height: 0; flex: none; border: 3px solid transparent; border-top: 4px solid #888; border-bottom: 0; margin: 0 5px; }
.dd.dk { border-top-color: #444; }

/* title bar */
.titlebar { flex: none; height: 41px; display: flex; border-bottom: 1px solid #eee; position: relative; }
.logo { width: 34px; height: 30px; margin: 4px 12px 0 8px; overflow: visible; }
.quick { height: 20px; display: flex; align-items: center; gap: 10px; }
.quick .dd { margin: 0 -2px 0 -5px; }
.quick .more { margin-left: 1px; }
.tabs { display: flex; align-items: center; height: 21px; margin-left: -4px; }
.tabs a { position: relative; padding: 0 13px; height: 19px; line-height: 18px; }
.tabs .on { background: #1a8cff; color: #fff; border-radius: 10px; font-weight: 700; }
.newbadge { position: absolute; right: 11px; top: -13px; background: #e5202a; color: #fff; font: 10px/12px "Open Sans", sans-serif; padding: 0 3px; }
.apptitle { position: absolute; left: 0; right: 0; top: 1px; text-align: center; line-height: 20px; pointer-events: none; }
.titleright { margin-left: auto; display: flex; flex-direction: column; }
.winbtns { height: 20px; display: flex; justify-content: flex-end; gap: 20px; padding-right: 11px; align-items: center; }
.userrow { display: flex; align-items: center; height: 20px; padding-right: 0; }
.userrow .search { width: 320px; height: 17px; }
.avatar { width: 16px; height: 16px; margin-left: 6px; }
.user { margin-right: 15px; }
.userrow > .ico { margin-right: 7px; }
.userrow > .wide { width: 18px; margin-right: 5px; }
.search { display: flex; align-items: center; border: 1px solid #d0d0d0; border-radius: 2px; background: #fff; padding-right: 4px; }
.search input { flex: 1; min-width: 0; border: 0; outline: 0; background: none; padding: 0 3px; height: 100%; }
.search .ico { width: 14px; height: 14px; }
input::placeholder { color: #8c8c8c; opacity: 1; }

/* ribbon */
.ribbon { flex: none; height: 99px; display: flex; padding: 0 0 0 8px; overflow: hidden; }
.rg { display: grid; grid-auto-rows: 23px; padding: 0 0 0 8px; border-right: 1px solid #dcdcdc; margin: 3px 0 4px; align-content: start; }
.rg button { gap: 3px; }
.rg .dd { margin-left: 4px; }
.ribbon .g1 { display: flex; padding: 0; width: 225px; }
.bigbtn { flex-direction: column; width: 40px; height: 67px; margin: 2px 3px 0 0; border-radius: 3px; background: #c3daf2; }
.bigbtn .cursor { width: 22px; height: 28px; margin: 3px 0 4px; }
.rg .bigbtn { gap: 0; }
.cols { display: grid; grid-template-columns: 98px 78px; grid-auto-rows: 23px; }
.glabel { grid-column: 1 / 3; padding-left: 55px; line-height: 28px; }
.g2 { grid-template-columns: 79px 106px; }
.g3 { grid-template-columns: 67px 112px 88px; }
.g3 button { gap: 2px; }
.g4 { grid-template-columns: 54px 54px 62px 58px; }
.g5 { grid-template-columns: 32px 26px; }
.g6 { grid-template-columns: 45px 102px 94px; }
.g6 .big { grid-row: 1 / 3; }
.big { width: 32px; height: 36px; fill: none; stroke: currentColor; color: var(--dark); margin-top: 2px; overflow: visible; }
.big.off { color: #b0b0b0; }
.g7 { width: 78px; padding-left: 14px; }
.g8 { grid-template-columns: 87px 101px 91px 98px 115px; }
.g8 .last { grid-column: 5; }

.context { flex: none; height: 26px; background: #f0f0f0; border-top: 1px solid #ddd; display: flex; gap: 4px; padding: 1px 2px; }
.sel { appearance: none; height: 23px; border: 1px solid #c8c8c8; border-radius: 3px; padding: 0 14px 0 3px; outline: 0; background: #fff url("data:image/svg+xml,%3Csvg xmlns='http://www.w3.org/2000/svg' width='5' height='4'%3E%3Cpath d='M0 0h5L2.500 3.500z' fill='%23444'/%3E%3C/svg%3E") no-repeat right 5px center / 5px 4px; }
.w100 { width: 99px; }

/* panes behind the dialog */
.work { flex: 1; min-height: 0; display: grid; grid-template-columns: 210px 278px 1fr 279px; column-gap: 5px; background: #f0f0f0; border-bottom: 1px solid #ccc; }
.pane { min-width: 0; min-height: 0; overflow: hidden; background: #fff; border: 1px solid var(--edge); border-top: 0; display: flex; flex-direction: column; }
.strip { flex: none; height: 11px; background: var(--strip); border-bottom: 1px solid var(--edge); border-top: 1px solid var(--edge); }
.phead { flex: none; height: 22px; background: var(--head); border-bottom: 2px solid var(--edge); color: #777; line-height: 21px; padding-left: 6px; }
.pane .strip { height: 12px; background: #e6e6e6; text-align: right; line-height: 0; }
.pane .strip .ico { width: 12px; height: 12px; margin-right: 4px; }
.minitools { flex: none; height: 28px; border-bottom: 1px solid #ddd; display: flex; align-items: center; padding-left: 6px; }
.listbtn { margin-left: 132px; width: 28px; height: 22px; background: #c3daf2; border-radius: 3px; padding-left: 4px; }
.backprops { justify-content: flex-end; }
.clip { height: 46px; overflow: hidden; }
.clip .grid { width: 262px; }
.canvas { background: #000; display: flex; align-items: flex-end; overflow: hidden; }
.drawing { width: 1138px; height: 60px; flex: none; }
.display { margin-left: -1px; }
.dtabs { flex: none; height: 28px; padding: 5px 0 0 80px; border-bottom: 1px solid var(--edge); }
.dtab { background: #e0e0e0; border-radius: 4px 4px 0 0; width: 48px; height: 22px; justify-content: flex-end; padding-right: 6px; color: #666; }
.dgrid { flex: 1; min-height: 0; margin: 2px 2px 0; border: 1px solid var(--line); border-width: 1px 1px 1px 0; display: flex; align-items: flex-start; overflow: hidden; }
.dgrid .grid { width: 259px; flex: none; }
.dgrid .grid th { background: #f4f4f4; height: 20px; line-height: 19px; }
.dgrid .grid th.on { background: var(--hi); }
.dgrid .cur { box-shadow: inset 0 0 0 2px #808080; }
.vtrack { flex: 1; padding: 112px 0 0 3px; }
.vtrack i { display: block; width: 8px; height: 186px; border-radius: 4px; background: #c8c8c8; }
.dfoot { flex: none; height: 39px; display: flex; justify-content: flex-end; padding: 7px 8px 5px; }
.outline { border: 1px solid #bbb; border-radius: 3px; height: 27px; padding: 0 8px; }

/* trees */
.tree { overflow: hidden; }
.tree li { height: 24px; display: flex; align-items: center; white-space: nowrap; padding-left: 7px; }
.tree li::before { content: ""; width: 16px; flex: none; }
.tree li.open::before, .tree li.shut::before { height: 6px; background: #888; }
.tree li.open::before { clip-path: polygon(4px 1px, 11px 1px, 7px 6px); }
.tree li.shut::before { clip-path: polygon(5px 0, 9px 3px, 5px 6px); height: 7px; }
.tree .leaf { padding-left: 24px; }
.tree .label { height: 21px; line-height: 20px; display: inline-flex; align-items: center; padding: 0 3px 0 0; border-radius: 3px; }
.tree .leaf .label { gap: 7px; padding: 0 3px; }
.tree .ico { width: 15px; height: 15px; }
.tree .picked .label { background: var(--sel); }
.leftnav .picked .label { width: 94px; background: #c3daf2; }
.leftnav .tree { flex: 1; padding-top: 2px; }
.leftnav .tree, .dnav .tree { min-height: 0; }
.dnav .picked .label { flex: 1; border-radius: 3px 0 0 3px; }
.alert { position: relative; display: inline-flex; }
.alert::after { content: ""; position: absolute; right: -3px; top: -4px; width: 6px; height: 6px; border-radius: 50%; background: #f00; }
.tree.text .label { padding: 0 3px; margin-left: -2px; }
.tree.text .lv0 { padding-left: 7px; }
.tree.text .lv1 { padding-left: 27px; }
.tree.text .lv2 { padding-left: 47px; }
.tree.text .lv3 { padding-left: 67px; }

/* tables */
.grid { border-collapse: separate; border-spacing: 0; table-layout: fixed; }
.grid th, .grid td { height: 21px; padding: 0 2px; border: 1px solid var(--line); border-width: 0 1px 1px 0; font-weight: 400; text-align: left; white-space: nowrap; overflow: hidden; line-height: 20px; }
.grid th { background: var(--head); text-align: center; padding: 0; border-color: #c6c6c6; }
.grid th.on { background: var(--hi); color: #fff; border-color: #68a8ee; font-weight: 700; }
.grid .c { text-align: center; }
.grid .n { text-align: right; }
.grid .ell { text-overflow: ellipsis; }
.grid .blue { color: #1b5cff; }
.props td:nth-child(2), .props td:nth-child(3) { padding-left: 3px; }
.bar { width: 11px; height: 11px; fill: none; stroke: #333; vertical-align: 0; }
input[type=checkbox] { appearance: none; width: 14px; height: 14px; margin: 0; border: 1px solid #8a8a8a; border-radius: 2px; background: #fff; vertical-align: middle; position: relative; }
.grid input[type=checkbox] { display: block; margin: 0 auto; }
input[type=checkbox]:checked { background: #2a7ee0; border-color: #2a7ee0; }
input[type=checkbox]:checked::after { content: ""; position: absolute; left: 4px; top: 1px; width: 4px; height: 8px; border: solid #fff; border-width: 0 2px 2px 0; transform: rotate(40deg); }
input[type=checkbox]:indeterminate::after { content: ""; position: absolute; inset: 1px; background: #9cc8fa; border: 1px solid #3a8ee8; }

/* definition dialog */
.dialog { position: absolute; inset: 77px 176px 119px 176px; background: #f0f0f0; border: 1px solid #bbb; display: flex; flex-direction: column; box-shadow: 0 2px 14px 2px rgba(0,0,0,.4); }
.dtitle { flex: none; height: 29px; display: flex; align-items: center; gap: 12px; padding: 9px 9px 0 10px; background: linear-gradient(90deg, #fefefe, #fbfbfb); border-bottom: 1px solid var(--edge); }
.dtitle h2 { font-size: 14px; margin-right: auto; }
.tbar { flex: none; height: 28px; background: #fff; border-bottom: 1px solid var(--edge); display: flex; align-items: center; gap: 10px; padding: 1px 3px 0; }
.tbar button { gap: 4px; }
.tbar .dd { margin: 0 -2px 0 3px; }
.tbar.main { height: 29px; padding: 0 1px; gap: 10px; }
.tbar.main button { padding-top: 3px; }
.tbar.main .dd { margin-right: -4px; }
.tbar.main .sep { margin: 0 -2px 0 -7px; }
.tbar.main button + .sep { margin: 0 -1px; }
.tbar.wide { gap: 13px; padding-left: 7px; height: 28px; border-bottom-width: 2px; }
.tbar.wide .dd { margin-right: 0; }
.sep { width: 1px; height: 20px; background: #ddd; }
.fx { font: italic 700 17px/16px "Liberation Serif", serif; color: var(--dark); }
.fx sub { font-size: 11px; color: var(--ac); line-height: 0; }
.tick { display: flex; align-items: center; gap: 3px; padding-bottom: 2px; }
.dbody { flex: 1; min-height: 0; display: grid; grid-template-columns: 126px 274px 1fr; column-gap: 5px; }
.dnav { background: #fff; display: flex; flex-direction: column; min-width: 0; min-height: 0; overflow: hidden; border-right: 1px solid var(--edge); }
.dnav .tree { flex: 1; padding-top: 1px; }
.hbar { flex: none; width: 90px; height: 8px; border-radius: 4px; background: #c8c8c8; margin: 0 0 3px 14px; }
.dmid { display: flex; flex-direction: column; gap: 5px; min-width: 0; min-height: 0; }
.complist { flex: 1; min-height: 0; background: #fff; border: 1px solid var(--edge); border-width: 0 1px 1px 0; display: flex; flex-direction: column; }
.complist .search { height: 20px; flex: none; }
.complist .tree { padding-top: 1px; }
.proplist { flex: none; height: 368px; background: #fff; overflow: hidden; border: 1px solid var(--edge); border-width: 0 1px 0 0; }
.proprow { display: flex; align-items: flex-start; }
.proprow .grid { width: 257px; flex: none; }
.vbar { flex: none; width: 8px; border-radius: 4px; background: #c8c8c8; }
.proprow .vbar { height: 172px; margin: 14px 0 0 5px; }
.dright { display: flex; flex-direction: column; min-width: 0; min-height: 0; }
.method { flex: none; height: 398px; background: #fff; border-bottom: 1px solid var(--edge); }
.mtabs { display: flex; padding: 0; line-height: 20px; }
.mtabs button { padding: 0 8px; background: #e0e0e0; border-right: 1px solid var(--edge); color: #888; }
.mtabs .on { background: #f6f6f6; color: #222; font-weight: 700; }
.methods { width: 930px; }
.methods td { height: 22px; }
.methods .focus { box-shadow: inset 0 0 0 2px #5fa3ea; }
.qtabs { flex: none; height: 31px; padding-top: 5px; display: flex; align-items: flex-end; gap: 4px; border-bottom: 2px solid var(--edge); background: linear-gradient(#f0f0f0 5px, #fff 5px); }
.qtabs button { height: 20px; background: #dedede; padding: 2px 6px 0 5px; border-radius: 2px 2px 0 0; }
.qtabs .on { height: 24px; padding: 1px 6px 0; background: #fff; border: 1px solid var(--edge); border-bottom: 0; color: #1b6fe8; }
.qtabs span { margin-left: 6px; color: #999; }
.quota { flex: 1; min-height: 0; display: grid; grid-template-columns: 288px 1fr; column-gap: 5px; border-bottom: 2px solid var(--edge); }
.qtree { background: #fff; border: 1px solid var(--edge); border-width: 0 1px; display: flex; flex-direction: column; min-height: 0; }
.qtree .search { height: 28px; margin: 1px 1px 0; flex: none; }
.qtree .search .ico { margin-right: 3px; }
.qscroll { flex: 1; min-height: 0; border-top: 1px solid var(--edge); margin-top: 1px; display: flex; }
.qscroll .tree { flex: 1; padding-top: 1px; }
.qscroll .picked .label { flex: 1; }
.qscroll .vbar { height: 108px; margin: 39px 3px 0 3px; }
.qgrid { background: #fff; display: flex; align-items: flex-start; min-width: 0; overflow: hidden; border-left: 1px solid var(--edge); }
.qgrid .grid { flex: 1; }
.qgrid .grid tr:first-child th { height: 22px; }
.qgrid .vbar { height: 270px; margin: 69px 3px 0 4px; }
.song td { font-family: "DejaVu Sans Mono", "Noto Sans CJK SC", monospace; font-size: 10px; line-height: 18px; }
.song td.cn { font: 12px/18px "Noto Sans CJK SC", sans-serif; }
.song .focus { box-shadow: inset 0 0 0 2px #808080; }
.filters { flex: none; height: 31px; background: #fff; border-bottom: 2px solid var(--edge); display: flex; align-items: center; padding: 1px 0 0 6px; gap: 4px; }
.filters .sel { height: 25px; }
.lib { width: 327px; }
.pro { width: 71px; }
.cat { width: 47px; }
.dbottom { flex: none; height: 10px; background: linear-gradient(90deg, #e2e2e2 90%, #fafafa 92%); display: flex; justify-content: flex-end; padding: 0 3px 0 0; }
.grip { width: 9px; height: 9px; }

/* status bar and task bar */
.status { flex: none; height: 31px; background: #fcfcfc; display: flex; align-items: center; padding-left: 2px; }
.s1 { width: 263px; } .s2 { width: 83px; } .s3 { width: 133px; } .s4 { width: 103px; } .s5 { width: 103px; }
.modes { display: flex; gap: 4px; margin-right: 7px; }
.modes button { height: 25px; border: 1px solid #999; border-radius: 3px; padding: 0 3px; }
.modes .on { background: #dbe8f9; border-color: #3a88e6; }
.modes button:nth-child(3) { margin: 0 3px; border-color: #bbb; }
.modes .dd { margin: 0 0 0 5px; }
.taskbar { flex: none; height: 40px; display: flex; background: linear-gradient(90deg, #c5e0d6 0, #d3d8d8 26%, #d4dcd4 46%, #dbddd6 52%, #d6dcdb 65%, #d5dadb 83%, #dddfcd 86%, #d3d8dc 89%, #dcddd0 95%, #dadbce 100%); }
.start { width: 48px; justify-content: center; }
.tsearch { width: 344px; background: #fff; border: 1px solid #b8bcbc; display: flex; align-items: center; padding-left: 11px; gap: 11px; }
.tsearch svg { width: 17px; height: 17px; fill: none; stroke: #000; }
.tsearch input { flex: 1; border: 0; outline: 0; background: none; font-size: 14px; padding: 0; }
.tsearch input::placeholder { color: #333; }
.apps { display: flex; }
.apps button { width: 49px; height: 40px; justify-content: center; position: relative; }
.apps svg { width: 24px; height: 24px; }
.apps .run::after { content: ""; position: absolute; left: 4px; right: 5px; bottom: 0; height: 2px; background: #08347c; }
.apps .two::after { background: linear-gradient(90deg, #08347c 80%, #7187b0 80%); }
.apps .active { background: rgba(255,255,255,.6); }
.apps .active::after { left: 0; right: 0; }
.tray { margin-left: auto; display: flex; align-items: center; gap: 8px; padding-right: 25px; }
.tray .ico { color: #111; }
.ime { font-size: 14px; margin-left: 7px; }
.clock { width: 60px; display: flex; flex-direction: column; text-align: center; line-height: 19px; margin-left: 2px; }
.note { margin-left: 11px; }
```
FILE: app.js
```js
const ico = id => `<svg class="ico"><use href="#${id}"/></svg>`;

// each entry: "-text" open, "+text" closed, or [text, icon, flags]
const beams = ['+施工段', '+轴线', '+柱', '+墙', '+门窗洞', '-梁',
  ['梁(L)', 'beam', 'picked'], ['连梁(G)', 'lianliang'], ['圈梁(E)', 'ring'], '-板',
  ['现浇板(B)', 'board', 'dot'], ['螺旋板(B)', 'spiral'], ['坡道(PD)', 'ramp', 'dot'], ['柱帽(V)', 'cap'],
  ['板洞(N)', 'hole'], ['板受力筋(S)', 'rebar'], ['板负筋(F)', 'rebar2'], ['楼层板带(H)', 'band'], ['板加腋(B)', 'yezi'],
  '+装配式', '+空心楼盖', '+楼梯'];
const finishes = ['-装修', ['房间(F)', 'home'], ['楼地面(V)', 'ground'], ['踢脚(S)', 'bricks'], ['墙裙(U)', 'dado'],
  ['墙面(W)', 'bricks'], ['天棚(P)', 'ceil'], ['吊顶(K)', 'hang'], ['独立柱装修', 'colfin'], ['单梁装修', 'beamfin'], '+土方'];

function navTree(items, dots) {
  return items.map(it => {
    if (typeof it === 'string')
      return `<li class="${it[0] === '-' ? 'open' : 'shut'}"><span class="label">${it.slice(1)}</span></li>`;
    const [text, icon, flag] = it;
    const pic = flag === 'dot' && dots ? `<span class="alert">${ico(icon)}</span>` : ico(icon);
    return `<li class="leaf${flag === 'picked' ? ' picked' : ''}"><span class="label">${pic}${text}</span></li>`;
  }).join('');
}
// each line: level, marker, text ("*" marks the selected node)
function textTree(lines) {
  return lines.map(l => {
    const mark = { '-': 'open', '+': 'shut', '*': 'picked' }[l[1]] || '';
    return `<li class="lv${l[0]} ${mark}"><span class="label">${l.slice(2)}</span></li>`;
  }).join('');
}
const put = (sel, html) => { document.querySelector(sel).innerHTML = html; };
put('[data-tree=main]', navTree([...beams, ...finishes], true));
put('[data-tree=dialog]', navTree([...beams, '+装修', '+土方', '+基础', '+其它', '+自定义'], false));
put('[data-tree=comp]', textTree(['0-梁', '1-屋面框架梁', '2*WKL9(2A)', '2 WKL4(1A)', '2 WKL8(1)', '2 WKL6(1)', '2 WKL5(1)',
  '2 WKL7(2A)', '2 WKL2(1)', '2 WKL3(1)', '2 WKL1(1)', '1-非框架梁', '2 L2(1)', '2 L1(1)']));
put('[data-tree=quota]', textTree(['0-混凝土及钢筋混凝土工程', '1+现浇混凝土', '1-现浇混凝土模板', '2 基础模板', '2-建筑物模板',
  '3*柱、梁模板', '3 板、墙、楼梯、装饰线模板', '3 阳台雨篷、栏板翻檐、檐沟、挑...', '3 其他构件模板', '3 后浇带模板增加费',
  '2+构筑物模板', '1+预制、预应力构件', '1+钢筋制作、安装', '1+混凝土构件运输及安装']));

// rebar grade signs that no text font carries
const signs = {
  '#': '<svg class="bar" viewBox="0 0 11 11"><path d="M5.500 0v11M2.500 2h6v5h-6zM.500 4.500h10M2.500 9h6"/></svg>',
  '^': '<svg class="bar" viewBox="0 0 11 11"><path d="M5.500 0v10M2 3h7v4H2z"/></svg>'
};
const box = (label, on) => `<input type="checkbox" aria-label="${label}"${on ? ' checked' : ''}>`;
function propRows(rows) {
  return rows.map(([n, name, value, plain, nobox]) =>
    `<tr><th>${n}</th><td class="ell${plain ? '' : ' blue'}">${name}</td><td>${value.replace(/[#^]/, s => signs[s])}</td><td>${nobox ? '' : box(name)}</td></tr>`).join('');
}
put('[data-props=front]', '<colgroup><col style="width:22px"><col style="width:101px"><col style="width:94px"><col style="width:40px"></colgroup>' +
  '<tr><th></th><th>属性名称</th><th>属性值</th><th>附加</th></tr>' + propRows([
  [1, '名称', 'WKL9(2A)', 0, 1], [2, '结构类别', '屋面框架梁'], [3, '跨数量', '2A', 1], [4, '截面宽度(mm)', '360'],
  [5, '截面高度(mm)', '600'], [6, '轴线距梁左边...', '(180)', 1], [7, '箍筋', '#8@100/200(4)'], [8, '肢数', '4', 0, 1],
  [9, '上部通长筋', '4#20'], [10, '下部通长筋', '4#16'], [11, '侧面构造或受...', 'N4#12'], [12, '拉筋', '(^8)'],
  [13, '定额类别', '单梁'], [14, '材质', '现浇混凝土'], [15, '混凝土类型', '(现浇砼 碎石4...']]));
put('[data-props=back]', '<colgroup><col style="width:21px"><col style="width:101px"><col style="width:99px"><col style="width:41px"></colgroup>' +
  propRows([[16, '混凝土强度等级', '(C30)'], [17, '混凝土外加剂', '(无)', 0, 1], ['', '泵送类型', '(混凝土泵)', 0, 1]]));

const M = '建筑物模板\u3000';
put('[data-quota]', '<colgroup><col style="width:21px"><col style="width:101px"><col><col style="width:101px"><col style="width:101px"></colgroup>' +
  '<tr><th></th><th>编码</th><th class="on">名称</th><th>单位</th><th>单价</th></tr>' + [
  ['异形柱、圆形柱\u2002复合木模', '3673.21'], ['框架柱接头', '2697.55'], ['柱支模超高每增加1m', '149.89'], ['基础梁\u2002组合钢模', '2711.86'],
  ['基础梁\u2002复合木模', '2769.98'], ['弧形基础梁', '3991.44'], ['矩形梁\u2002组合钢模', '3449.99'], ['矩形梁\u2002复合木模', '3333.78'],
  ['异形梁', '3993.66'], ['弧形梁', '4325.57'], ['拱形梁', '5230.81'], ['直形圈过梁\u2002组合钢模', '2745.35'], ['直形圈过梁\u2002复合木模', '2221.72'],
  ['弧形圈、过梁', '3046.51'], ['梁支模超高每增加1m', '260.46']].map(([name, price], i) =>
  `<tr><th${i === 8 ? ' class="on"' : ''}>${i + 4}</th><td>4-${158 + i}</td><td class="cn${i === 8 ? ' focus' : ''}">${M}${name}</td><td>100m2</td><td>${price}</td></tr>`).join(''));

const shown = new Set([0, 1, 2, 7, 19, 20, 21, 22, 24, 26, 28, 32, 34]), partial = new Set([23, 33]);
let rows = '<colgroup><col><col style="width:63px"><col style="width:63px"></colgroup><tr><th></th><th class="on">显示图元</th><th>显示名称</th></tr>';
for (let i = 0; i < 35; i++)
  rows += `<tr><td></td><td class="${i === 23 ? 'cur' : ''}">${box('显示图元', shown.has(i))}</td><td>${box('显示名称')}</td></tr>`;
put('[data-display]', rows);
document.querySelectorAll('[data-display] tr').forEach((tr, i) => {
  if (partial.has(i - 1)) tr.querySelector('input').indeterminate = true;
});

const widths = [21, 111, 46, 201, 47, 100, 152, 70, 62, 60, 61];
document.querySelectorAll('.methods thead th').forEach((th, i) => { th.style.width = widths[i] + 'px'; });
```
